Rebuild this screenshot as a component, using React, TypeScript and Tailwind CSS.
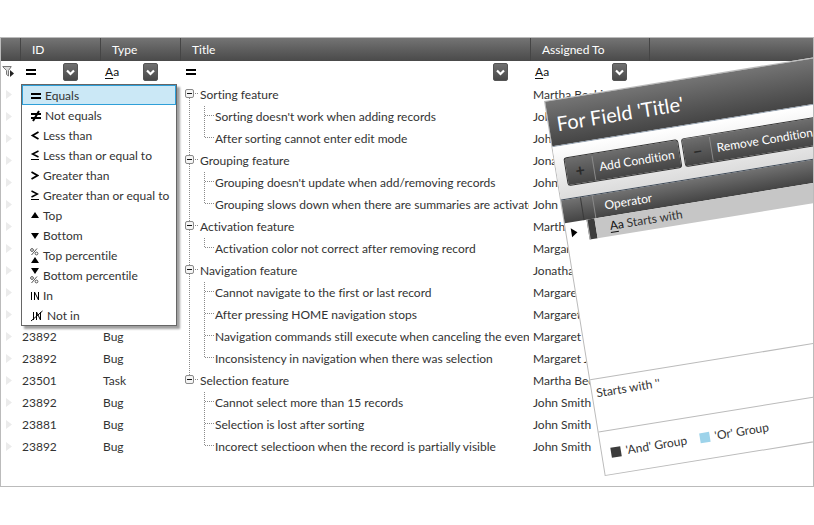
import type { ReactNode } from "react";

type Kind = "group" | "child" | "last";

const rows: { id: string; type: string; kind: Kind; title: string; who: string; below: boolean }[] = [
  { id: "23892", type: "Task", kind: "group", title: "Sorting feature", who: "Martha Becking", below: true },
  { id: "23892", type: "Bug", kind: "child", title: "Sorting doesn't work when adding records", who: "John Smith", below: true },
  { id: "23892", type: "Bug", kind: "last", title: "After sorting cannot enter edit mode", who: "John Smith", below: true },
  { id: "23892", type: "Task", kind: "group", title: "Grouping feature", who: "Jonathan Hill", below: true },
  { id: "23892", type: "Bug", kind: "child", title: "Grouping doesn't update when add/removing records", who: "John Smith", below: true },
  { id: "23892", type: "Bug", kind: "last", title: "Grouping slows down when there are summaries are activated", who: "John Smith", below: true },
  { id: "23892", type: "Task", kind: "group", title: "Activation feature", who: "Martha Becking", below: true },
  { id: "23892", type: "Bug", kind: "last", title: "Activation color not correct after removing record", who: "Margaret Jones", below: true },
  { id: "23892", type: "Task", kind: "group", title: "Navigation feature", who: "Jonathan Hill", below: true },
  { id: "23892", type: "Bug", kind: "child", title: "Cannot navigate to the first or last record", who: "Margaret Jones", below: true },
  { id: "23892", type: "Bug", kind: "child", title: "After pressing HOME navigation stops", who: "Margaret Jones", below: true },
  { id: "23892", type: "Bug", kind: "child", title: "Navigation commands still execute when canceling the event", who: "Margaret Jones", below: true },
  { id: "23892", type: "Bug", kind: "last", title: "Inconsistency in navigation when there was selection", who: "Margaret Jones", below: true },
  { id: "23501", type: "Task", kind: "group", title: "Selection feature", who: "Martha Becking", below: false },
  { id: "23892", type: "Bug", kind: "child", title: "Cannot select more than 15 records", who: "John Smith", below: false },
  { id: "23881", type: "Bug", kind: "child", title: "Selection is lost after sorting", who: "John Smith", below: false },
  { id: "23892", type: "Bug", kind: "last", title: "Incorect selectioon when the record is partially visible", who: "John Smith", below: false },
];

function EqualsIcon() {
  return (
    <svg width="12" height="12" viewBox="0 0 12 12" className="shrink-0">
      <path d="M1 3h10v2H1zM1 7h10v2H1z" fill="#000" />
    </svg>
  );
}

function TextIcon() {
  return (
    <span className="text-xs leading-4 text-[#111111]">
      <span className="underline underline-offset-2">A</span>a
    </span>
  );
}

function FunnelIcon() {
  return (
    <svg width="12" height="12" viewBox="0 0 12 12" className="mt-1 ml-px">
      <path d="M.5 1.500h9M1 2l3.500 3.500v4l2 1.500V5.500L9 2" fill="#ddd" stroke="#777" />
      <path d="M8 5l4 3.500-4 3.500z" fill="#222" />
    </svg>
  );
}

function DropButton({ label }: { label: string }) {
  return (
    <button
      aria-label={label}
      className="flex h-[18px] w-[15px] shrink-0 items-center justify-center rounded-[2px] border border-[#555555] bg-linear-to-b from-[#707070] to-[#484848]"
    >
      <svg width="9" height="7" viewBox="0 0 9 7" className="shrink-0">
        <path d="M1 1.500l3.500 3.500L8 1.500" fill="none" stroke="#fff" strokeWidth="2.200" />
      </svg>
    </button>
  );
}

function Tree({ kind, below, first }: { kind: Kind; below: boolean; first: boolean }) {
  const dots = { stroke: "#8a8a8a", strokeDasharray: "1 1", fill: "none" };
  if (kind === "group") {
    return (
      <svg width="20" height="22" viewBox="0 0 20 22" className="shrink-0">
        {!first && <path d="M9.500 0v6" {...dots} />}
        {below && <path d="M9.500 14v8" {...dots} />}
        <path d="M15 9.500h4" {...dots} />
        <rect x="5.500" y="5.500" width="8" height="8" rx="1.500" fill="#f4f4f4" stroke="#8a8a8a" />
        <path d="M7 9.500h5" stroke="#111" />
      </svg>
    );
  }
  return (
    <svg width="35" height="22" viewBox="0 0 35 22" className="shrink-0">
      {below && <path d="M9.500 0v22" {...dots} />}
      <path d={kind === "last" ? "M24.500 0v10" : "M24.500 0v22"} {...dots} />
      <path d="M25 9.500h9" {...dots} />
    </svg>
  );
}

const percent = (y: number) => (
  <g transform={`translate(0 ${y})`} stroke="#555">
    <circle cx="2" cy="2" r="1.400" />
    <circle cx="6.500" cy="5.500" r="1.400" />
    <path d="M7 .5l-5.500 6.500" />
  </g>
);

const menu: { label: string; width: number; icon: ReactNode }[] = [
  { label: "Equals", width: 11, icon: <path d="M1 7h10M1 11h10" strokeWidth="2" /> },
  { label: "Not equals", width: 11, icon: <path d="M1 7h10M1 11h10M9 4L3 14" strokeWidth="2" /> },
  { label: "Less than", width: 9, icon: <path d="M8.500 5L2.500 8.500l6 3.500" strokeWidth="1.800" /> },
  { label: "Less than or equal to", width: 9, icon: <><path d="M8.500 4l-6 3 6 3" strokeWidth="1.500" /><path d="M1 12.500h8" /></> },
  { label: "Greater than", width: 9, icon: <path d="M1.500 5l6 3.500-6 3.500" strokeWidth="1.800" /> },
  { label: "Greater than or equal to", width: 9, icon: <><path d="M1.500 4l6 3-6 3" strokeWidth="1.500" /><path d="M1 12.500h8" /></> },
  { label: "Top", width: 9, icon: <path d="M1 11l4-6 4 6z" fill="#000" stroke="none" /> },
  { label: "Bottom", width: 9, icon: <path d="M1 6l4 6 4-6z" fill="#000" stroke="none" /> },
  { label: "Top percentile", width: 9, icon: <>{percent(1)}<path d="M1 16l4-6 4 6z" fill="#000" stroke="none" /></> },
  { label: "Bottom percentile", width: 9, icon: <><path d="M1 1l4 6 4-6z" fill="#000" stroke="none" />{percent(9)}</> },
  { label: "In", width: 9, icon: <path d="M1.500 5v8M4.500 13V5l4 8V5" /> },
  { label: "Not in", width: 13, icon: <path d="M3.500 5v8M6.500 13V5l4 8V5M1 14L12.500 4" /> },
];

function OperatorMenu() {
  return (
    <ul role="menu" className="absolute top-[46px] left-5 z-10 w-[156px] border border-[#666666] bg-white shadow-[3px_3px_2px_#a0a0a0]">
      {menu.map((m, i) => (
        <li key={m.label} role="none">
          <button
            role="menuitem"
            className={`flex h-5 w-full items-center gap-1 border pt-0.5 pl-[7px] text-left leading-5 whitespace-nowrap ${
              i === 0 ? "border-[#2f9fd8] bg-[#cbe8f6]" : "border-transparent"
            }`}
          >
            <svg width={m.width} height="18" viewBox={`0 0 ${m.width} 18`} fill="none" stroke="#000" className="shrink-0">
              {m.icon}
            </svg>
            {m.label}
          </button>
        </li>
      ))}
    </ul>
  );
}

function ActionButton({ sign, label }: { sign: string; label: string }) {
  return (
    <button className="flex h-[29px] shrink-0 items-center rounded-[3px] border border-[#333333] bg-linear-to-b from-[#6e6e6e] to-[#454545] text-white">
      <span className="w-[27px] text-center text-base leading-6 font-bold text-[#2a2a2a]">{sign}</span>
      <span className="border-l border-[#8a8a8a] px-[5px] leading-6 whitespace-nowrap">{label}</span>
    </button>
  );
}

function ConditionDialog() {
  return (
    <section
      aria-label="For Field 'Title'"
      className="absolute top-[63px] left-[543px] flex h-[380px] w-[420px] origin-top-left -rotate-[9.2deg] flex-col border border-[#bbbbbb] bg-white"
    >
      <h2 className="flex h-[46px] shrink-0 items-center border-b border-[#8f9cab] bg-linear-to-b from-[#747474] to-[#454545] pl-2 text-xl font-normal text-white">
        For Field 'Title'
      </h2>
      <div className="flex h-[53px] shrink-0 items-center gap-[3px] bg-linear-to-b from-white to-[#dcdcdc] pl-[9px]">
        <ActionButton sign="+" label="Add Condition" />
        <ActionButton sign="−" label="Remove Condition" />
      </div>
      <div className="flex h-6 shrink-0 items-stretch border-t border-[#3b4653] bg-linear-to-b from-[#727272] to-[#444444] leading-6 text-white">
        <span className="w-5 border-r border-[#3a3a3a]" />
        <span className="w-3 border-r border-[#8a8a8a]" />
        <span className="pl-2.5">Operator</span>
      </div>
      <div className="flex h-5 shrink-0 items-center">
        <svg width="22" height="20" viewBox="0 0 22 20" className="shrink-0">
          <path d="M5 6l6 5-6 4z" fill="#000" />
        </svg>
        <span className="h-5 w-2 border-l border-[#bbbbbb] bg-[#3c3c3c]" />
        <span className="flex h-5 grow items-center gap-[3px] bg-[#c6c6c6] pl-3.5 leading-5">
          <TextIcon /> Starts with
        </span>
      </div>
      <div className="grow" />
      <p className="h-[53px] shrink-0 border-t border-[#bbbbbb] px-1 py-1 leading-5">Starts with ''</p>
      <div className="flex h-11 shrink-0 items-center gap-[5px] border-t border-[#bbbbbb] pl-[9px]">
        <span className="size-2.5 bg-[#3c3c3c]" />
        <span>'And' Group</span>
        <span className="ml-2 size-2.5 bg-[#9dd3ea]" />
        <span>'Or' Group</span>
      </div>
    </section>
  );
}

export default function App() {
  const th = "border-r border-[#454545] pl-[11px] text-left font-normal";
  return (
    <main className="bg-white pt-[37px] font-[Lato,'Noto_Sans',sans-serif] text-xs text-[#333333] [font-variant-ligatures:none]">
      <div className="relative overflow-hidden border border-[#bbbbbb] pb-7">
        <table className="w-full table-fixed border-separate border-spacing-0">
          <colgroup>
            <col className="w-5" />
            <col className="w-20" />
            <col className="w-20" />
            <col className="w-[350px]" />
            <col className="w-[119px]" />
            <col />
          </colgroup>
          <thead>
            <tr className="h-[23px] bg-linear-to-b from-[#747474] to-[#4a4a4a] text-white">
              <th className={th} />
              <th className={th}>ID</th>
              <th className={th}>Type</th>
              <th className={th}>Title</th>
              <th className={th}>Assigned To</th>
              <th />
            </tr>
            <tr className="h-[23px] align-top">
              <td><FunnelIcon /></td>
              {["ID", "Type", "Title", "Assigned To"].map((c, i) => (
                <td key={c}>
                  <div className="flex items-center justify-between pt-0.5 pr-[23px] pl-1">
                    {i % 2 === 0 ? <EqualsIcon /> : <TextIcon />}
                    <DropButton label={`Filter ${c}`} />
                  </div>
                </td>
              ))}
              <td />
            </tr>
          </thead>
          <tbody>
            {rows.map((r, i) => (
              <tr key={i} className="h-[22px] leading-[22px]">
                <td>
                  <svg width="20" height="22" viewBox="0 0 20 22" className="block"><path d="M5 6l6 4.500-6 4.500z" fill="#ebebeb" /></svg>
                </td>
                <td className="pl-px">{r.id}</td>
                <td className="pl-0.5">{r.type}</td>
                <td>
                  <div className="-ml-px mr-0.5 flex h-[22px] overflow-hidden whitespace-nowrap">
                    <Tree kind={r.kind} below={r.below} first={i === 0} />
                    {r.title}
                  </div>
                </td>
                <td className="pl-0.5 whitespace-nowrap">{r.who}</td>
                <td />
              </tr>
            ))}
          </tbody>
        </table>
        <OperatorMenu />
        <ConditionDialog />
      </div>
    </main>
  );
}
